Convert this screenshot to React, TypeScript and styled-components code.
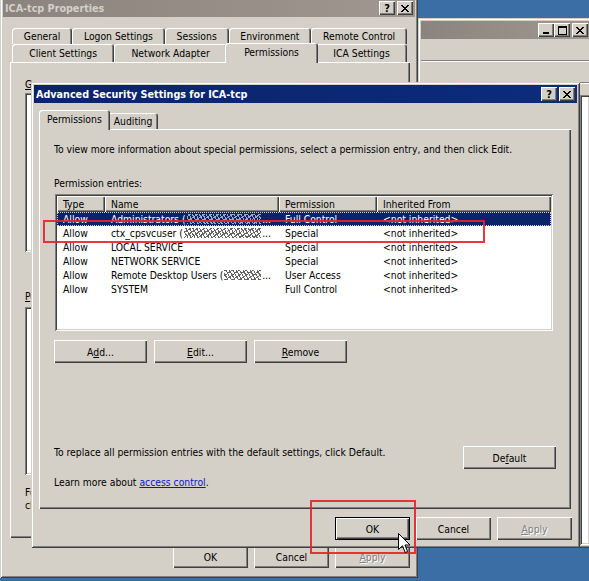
import React from 'react';
import styled, { createGlobalStyle, css } from 'styled-components';

const FACE = '#d4d0c8';
const SHADOW = '#808080';
const DARK = '#404040';
const NAVY = '#0a246a';
const UI_FONT = `"DejaVu Sans Condensed", Tahoma, "Liberation Sans", Arial, sans-serif`;
const UI_SIZE = '10.3px';

const GlobalStyle = createGlobalStyle`
  html, body { margin: 0; padding: 0; }
  body {
    font-family: ${UI_FONT};
    font-size: ${UI_SIZE};
    color: #000;
    background: #3a6ea5;
  }
  * { box-sizing: border-box; }
`;

const raisedFrame = css`
  box-shadow: inset 1px 1px ${FACE}, inset -1px -1px ${DARK}, inset 2px 2px #fff, inset -2px -2px ${SHADOW};
`;
const raisedButton = css`
  box-shadow: inset 1px 1px #fff, inset -1px -1px ${DARK}, inset -2px -2px ${SHADOW};
`;
const sunken = css`
  box-shadow: inset 1px 1px ${SHADOW}, inset -1px -1px #fff, inset 2px 2px ${DARK}, inset -2px -2px ${FACE};
`;

type Entry = {
  type: string;
  name: string;
  redacted?: boolean;
  permission: string;
  selected?: boolean;
};

const entries: Entry[] = [
  { type: 'Allow', name: 'Administrators (', redacted: true, permission: 'Full Control', selected: true },
  { type: 'Allow', name: 'ctx_cpsvcuser (', redacted: true, permission: 'Special' },
  { type: 'Allow', name: 'LOCAL SERVICE', permission: 'Special' },
  { type: 'Allow', name: 'NETWORK SERVICE', permission: 'Special' },
  { type: 'Allow', name: 'Remote Desktop Users (', redacted: true, permission: 'User Access' },
  { type: 'Allow', name: 'SYSTEM', permission: 'Full Control' },
];

const backTabsTop = ['General', 'Logon Settings', 'Sessions', 'Environment', 'Remote Control'];
const backTabsBottom = ['Client Settings', 'Network Adapter', 'Permissions', 'ICA Settings'];

const CloseGlyph = () => (
  <svg width="8" height="7" viewBox="0 0 8 7" shapeRendering="crispEdges">
    <path
      fill="#000"
      d="M0 0h2v1H0zM6 0h2v1H6zM1 1h2v1H1zM5 1h2v1H5zM2 2h4v1H2zM3 3h2v1H3zM2 4h4v1H2zM1 5h2v1H1zM5 5h2v1H5zM0 6h2v1H0zM6 6h2v1H6z"
    />
  </svg>
);

const MinGlyph = () => (
  <svg width="8" height="8" viewBox="0 0 8 8" shapeRendering="crispEdges">
    <rect x="1" y="6" width="6" height="2" fill="#000" />
  </svg>
);

const MaxGlyph = () => (
  <svg width="9" height="9" viewBox="0 0 9 9" shapeRendering="crispEdges">
    <path fill="#000" d="M0 0h9v2H0zM0 2h1v7H0zM8 2h1v7H8zM0 8h9v1H0z" />
  </svg>
);

const Cursor = () => (
  <svg width="13" height="21" viewBox="0 0 13 21">
    <path
      d="M0.5 0.5 L0.5 16.5 L4.5 12.8 L7.2 19.5 L9.6 18.5 L7 12 L12 12 Z"
      fill="#fff"
      stroke="#000"
      strokeWidth="1"
      strokeLinejoin="miter"
    />
  </svg>
);

const App = () => {
  return (
    <>
      <GlobalStyle />
      <Styled.Desktop>
        {/* window behind, on the right */}
        <Styled.Win $x={418} $y={18} $w={175} $h={530}>
          <Styled.TitleBar>
            <Styled.TitleText />
            <Styled.CaptionButton>
              <MinGlyph />
            </Styled.CaptionButton>
            <Styled.CaptionButton>
              <MaxGlyph />
            </Styled.CaptionButton>
            <Styled.CaptionButton $gap>
              <CloseGlyph />
            </Styled.CaptionButton>
          </Styled.TitleBar>
          <Styled.MenuBar />
          <Styled.ToolBar />
          <Styled.SplitArea>
            <Styled.TreePane />
            <Styled.DetailPane />
          </Styled.SplitArea>
        </Styled.Win>

        {/* ICA-tcp Properties */}
        <Styled.Win $x={0} $y={-4} $w={418} $h={582}>
          <Styled.TitleBar>
            <Styled.TitleText>ICA-tcp Properties</Styled.TitleText>
            <Styled.CaptionButton>?</Styled.CaptionButton>
            <Styled.CaptionButton $gap>
              <CloseGlyph />
            </Styled.CaptionButton>
          </Styled.TitleBar>
          <Styled.SheetBody $pad="10px 5px 7px 7px">
            <Styled.TabRow $h={17}>
              {backTabsTop.map((t) => (
                <Styled.Tab key={t} $grow $h={16}>
                  {t}
                </Styled.Tab>
              ))}
            </Styled.TabRow>
            <Styled.TabRow $h={18}>
              {backTabsBottom.map((t) => (
                <Styled.Tab key={t} $grow $h={18} $selected={t === 'Permissions'}>
                  {t}
                </Styled.Tab>
              ))}
            </Styled.TabRow>
            <Styled.Panel $h={476} $pad="16px 15px 0 15px">
              <Styled.Text>
                <u>G</u>roup or user names:
              </Styled.Text>
              <Styled.Box $w={370} $h={159} $mt={2} />
              <Styled.Text $mt={38}>
                <u>P</u>ermissions for Administrators
              </Styled.Text>
              <Styled.Box $w={370} $h={168} $mt={4} />
              <Styled.Text $mt={11}>For special permissions or for advanced settings,</Styled.Text>
              <Styled.Text>click Advanced.</Styled.Text>
            </Styled.Panel>
            <Styled.DialogButtons $mt={7} $gap={6}>
              <Styled.Button $w={75}>OK</Styled.Button>
              <Styled.Button $w={75}>Cancel</Styled.Button>
              <Styled.Button $w={75} disabled>
                <u>A</u>pply
              </Styled.Button>
            </Styled.DialogButtons>
          </Styled.SheetBody>
        </Styled.Win>

        {/* Advanced Security Settings dialog */}
        <Styled.Win $x={31} $y={82} $w={549} $h={466}>
          <Styled.TitleBar $active>
            <Styled.TitleText>Advanced Security Settings for ICA-tcp</Styled.TitleText>
            <Styled.CaptionButton>?</Styled.CaptionButton>
            <Styled.CaptionButton $gap>
              <CloseGlyph />
            </Styled.CaptionButton>
          </Styled.TitleBar>
          <Styled.SheetBody $pad="8px 6px 5px 5px">
            <Styled.TabRow $h={18} $inset={2}>
              <Styled.Tab $selected $h={18}>
                Permissions
              </Styled.Tab>
              <Styled.Tab $h={16}>Auditing</Styled.Tab>
            </Styled.TabRow>
            <Styled.Panel $h={380} $pad="14px 15px 20px 15px">
              <Styled.Text>
                To view more information about special permissions, select a permission entry, and then click Edit.
              </Styled.Text>
              <Styled.Text $mt={21}>Permission entries:</Styled.Text>
              <Styled.ListView>
                <Styled.Header>
                  <Styled.HeaderCell>Type</Styled.HeaderCell>
                  <Styled.HeaderCell>Name</Styled.HeaderCell>
                  <Styled.HeaderCell>Permission</Styled.HeaderCell>
                  <Styled.HeaderCell>Inherited From</Styled.HeaderCell>
                </Styled.Header>
                {entries.map((e) => (
                  <Styled.ListRow key={e.name} $selected={e.selected}>
                    <Styled.Cell>{e.type}</Styled.Cell>
                    <Styled.NameCell>
                      {e.name}
                      {e.redacted && (
                        <>
                          <Styled.Smudge />
                          ...
                        </>
                      )}
                    </Styled.NameCell>
                    <Styled.Cell>{e.permission}</Styled.Cell>
                    <Styled.Cell>&lt;not inherited&gt;</Styled.Cell>
                  </Styled.ListRow>
                ))}
              </Styled.ListView>
              <Styled.Row $mt={9} $gap={7}>
                <Styled.Button $w={93}>
                  A<u>d</u>d...
                </Styled.Button>
                <Styled.Button $w={93}>
                  <u>E</u>dit...
                </Styled.Button>
                <Styled.Button $w={93}>
                  <u>R</u>emove
                </Styled.Button>
              </Styled.Row>
              <Styled.Spacer />
              <Styled.Row $justify="space-between" $align="flex-start">
                <Styled.Text>To replace all permission entries with the default settings, click Default.</Styled.Text>
                <Styled.Button $w={93}>
                  De<u>f</u>ault
                </Styled.Button>
              </Styled.Row>
              <Styled.Text $mt={7}>
                Learn more about <Styled.Link>access control</Styled.Link>.
              </Styled.Text>
            </Styled.Panel>
            <Styled.DialogButtons $mt={8} $gap={6} $right={-1}>
              <Styled.Button $w={75} $default>
                OK
              </Styled.Button>
              <Styled.Button $w={75}>Cancel</Styled.Button>
              <Styled.Button $w={75} disabled>
                <u>A</u>pply
              </Styled.Button>
            </Styled.DialogButtons>
          </Styled.SheetBody>
        </Styled.Win>

        {/* annotations drawn over the screenshot */}
        <Styled.Marker $x={43} $y={220} $w={442} $h={23} />
        <Styled.Marker $x={310} $y={500} $w={106} $h={54} />
        <Styled.Pointer>
          <Cursor />
        </Styled.Pointer>
      </Styled.Desktop>
    </>
  );
};

const Styled = {
  Desktop: styled.div`
    position: relative;
    width: 589px;
    height: 581px;
    overflow: hidden;
    background: #3a6ea5;
  `,
  Win: styled.div<{ $x: number; $y: number; $w: number; $h: number }>`
    position: absolute;
    left: ${(p) => p.$x}px;
    top: ${(p) => p.$y}px;
    width: ${(p) => p.$w}px;
    height: ${(p) => p.$h}px;
    display: flex;
    flex-direction: column;
    padding: 3px;
    background: ${FACE};
    ${raisedFrame}
  `,
  TitleBar: styled.div<{ $active?: boolean }>`
    flex: none;
    height: 18px;
    display: flex;
    align-items: center;
    padding: 0 2px 0 2px;
    background: ${(p) =>
      p.$active ? `linear-gradient(90deg, ${NAVY}, #0c2b7e)` : 'linear-gradient(90deg, #8b837d, #a0978f)'};
    color: ${(p) => (p.$active ? '#fff' : FACE)};
    font-weight: bold;
    font-size: 10.7px;
  `,
  TitleText: styled.span`
    flex: 1;
    white-space: nowrap;
    overflow: hidden;
  `,
  CaptionButton: styled.div<{ $gap?: boolean }>`
    flex: none;
    width: 16px;
    height: 14px;
    margin-left: ${(p) => (p.$gap ? 2 : 0)}px;
    display: flex;
    align-items: center;
    justify-content: center;
    background: ${FACE};
    color: #000;
    font-weight: bold;
    font-size: 11px;
    line-height: 1;
    ${raisedButton}
  `,
  MenuBar: styled.div`
    flex: none;
    height: 21px;
    border-bottom: 1px solid ${SHADOW};
    box-shadow: 0 1px #fff;
    margin-top: 1px;
  `,
  ToolBar: styled.div`
    flex: none;
    height: 20px;
    margin-top: 2px;
    border-bottom: 1px solid ${SHADOW};
    box-shadow: 0 1px #fff;
  `,
  SplitArea: styled.div`
    flex: 1;
    display: flex;
    padding-top: 12px;
  `,
  TreePane: styled.div`
    flex: none;
    width: 159px;
  `,
  DetailPane: styled.div`
    flex: 1;
    background: #fff;
    ${sunken}
  `,
  SheetBody: styled.div<{ $pad: string }>`
    flex: 1;
    display: flex;
    flex-direction: column;
    padding: ${(p) => p.$pad};
  `,
  TabRow: styled.div<{ $h: number; $inset?: number }>`
    flex: none;
    position: relative;
    z-index: 1;
    height: ${(p) => p.$h}px;
    display: flex;
    align-items: flex-end;
    padding: 0 ${(p) => (p.$inset ? 0 : 3)}px 0 2px;
  `,
  Tab: styled.div<{ $selected?: boolean; $grow?: boolean; $h: number }>`
    flex: ${(p) => (p.$grow ? '1 1 auto' : 'none')};
    position: relative;
    z-index: ${(p) => (p.$selected ? 2 : 1)};
    height: ${(p) => (p.$selected ? p.$h + 2 : p.$h)}px;
    margin: 0 ${(p) => (p.$selected ? -2 : 0)}px ${(p) => (p.$selected ? -1 : 0)}px;
    padding: ${(p) => (p.$selected ? '0 8px 2px' : '0 6px')};
    display: flex;
    align-items: center;
    justify-content: center;
    white-space: nowrap;
    background: ${FACE};
    border-radius: 3px 3px 0 0;
    box-shadow: inset 1px 1px #fff, inset -1px 0 ${DARK}, inset -2px 0 ${SHADOW};
  `,
  Panel: styled.div<{ $h: number; $pad: string }>`
    flex: none;
    height: ${(p) => p.$h}px;
    display: flex;
    flex-direction: column;
    padding: ${(p) => p.$pad};
    box-shadow: inset 1px 1px #fff, inset -1px -1px ${DARK}, inset -2px -2px ${SHADOW};
  `,
  Text: styled.div<{ $mt?: number }>`
    margin-top: ${(p) => p.$mt ?? 0}px;
    line-height: 13px;
    white-space: nowrap;
  `,
  Link: styled.span`
    color: #1010c8;
    text-decoration: underline;
  `,
  Box: styled.div<{ $w: number; $h: number; $mt: number }>`
    flex: none;
    width: ${(p) => p.$w}px;
    height: ${(p) => p.$h}px;
    margin-top: ${(p) => p.$mt}px;
    background: #fff;
    ${sunken}
  `,
  Row: styled.div<{ $mt?: number; $gap?: number; $justify?: string; $align?: string }>`
    flex: none;
    display: flex;
    margin-top: ${(p) => p.$mt ?? 0}px;
    gap: ${(p) => p.$gap ?? 6}px;
    justify-content: ${(p) => p.$justify ?? 'flex-start'};
    align-items: ${(p) => p.$align ?? 'flex-start'};
  `,
  Spacer: styled.div`
    flex: 1;
  `,
  DialogButtons: styled.div<{ $mt: number; $gap: number; $right?: number }>`
    flex: none;
    display: flex;
    justify-content: flex-end;
    gap: ${(p) => p.$gap}px;
    margin-top: ${(p) => p.$mt}px;
    margin-right: ${(p) => p.$right ?? 0}px;
  `,
  Button: styled.button<{ $w: number; $default?: boolean }>`
    flex: none;
    width: ${(p) => p.$w}px;
    height: 23px;
    padding: 0;
    border: none;
    font-family: ${UI_FONT};
    font-size: ${UI_SIZE};
    color: #000;
    background: ${FACE};
    ${(p) =>
      p.$default
        ? css`
            box-shadow: inset 0 0 0 1px #000, inset 2px 2px #fff, inset -2px -2px ${DARK}, inset -3px -3px ${SHADOW};
          `
        : raisedButton}
    &:disabled {
      color: ${SHADOW};
      text-shadow: 1px 1px #fff;
    }
  `,
  ListView: styled.div`
    flex: none;
    width: 498px;
    height: 137px;
    margin: 4px 0 0 1px;
    padding: 2px;
    background: #fff;
    ${sunken}
  `,
  Header: styled.div`
    display: grid;
    grid-template-columns: 48px 174px 98px 1fr;
    height: 16px;
  `,
  HeaderCell: styled.div`
    padding-left: 6px;
    line-height: 16px;
    background: ${FACE};
    white-space: nowrap;
    overflow: hidden;
    ${raisedButton}
  `,
  ListRow: styled.div<{ $selected?: boolean }>`
    display: grid;
    grid-template-columns: 48px 174px 98px 1fr;
    height: 14px;
    line-height: 14px;
    background: ${(p) => (p.$selected ? NAVY : 'transparent')};
    color: ${(p) => (p.$selected ? '#fff' : '#000')};
    outline: ${(p) => (p.$selected ? '1px dotted #d8d0a8' : 'none')};
    outline-offset: -1px;
  `,
  Cell: styled.div`
    padding-left: 6px;
    white-space: nowrap;
    overflow: hidden;
  `,
  NameCell: styled.div`
    display: flex;
    align-items: center;
    padding: 0 8px 0 6px;
    white-space: nowrap;
    overflow: hidden;
  `,
  Smudge: styled.span`
    flex: 1;
    height: 10px;
    margin: 0 1px 0 1px;
    opacity: 0.6;
    background-image: repeating-linear-gradient(60deg, currentColor 0 1px, transparent 1px 3px),
      repeating-linear-gradient(-35deg, currentColor 0 1px, transparent 1px 4px);
  `,
  Marker: styled.div<{ $x: number; $y: number; $w: number; $h: number }>`
    position: absolute;
    left: ${(p) => p.$x}px;
    top: ${(p) => p.$y}px;
    width: ${(p) => p.$w}px;
    height: ${(p) => p.$h}px;
    border: 2px solid rgba(228, 36, 40, 0.9);
    pointer-events: none;
  `,
  Pointer: styled.div`
    position: absolute;
    left: 398px;
    top: 533px;
    width: 13px;
    height: 21px;
  `,
};

export default App;
